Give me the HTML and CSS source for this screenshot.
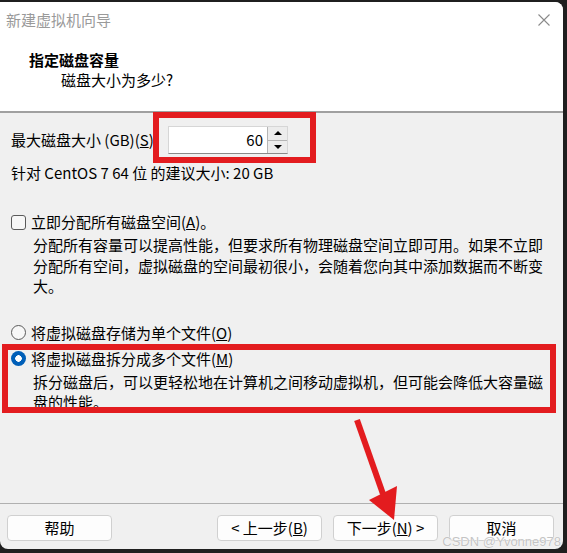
FILE: index.html
```html
<!DOCTYPE html>
<html>
<head>
    <title>新建虚拟机向导</title>
    <link rel="stylesheet" href="styles.css">
</head>
<body>
    <div class="window">
        <div class="header">
            <div class="title-bar">
                <span class="title">新建虚拟机向导</span>
                <svg class="close" width="12" height="12" viewBox="0 0 12 12">
                    <path d="M0.5 0.5 L11.5 11.5 M11.5 0.5 L0.5 11.5" stroke="#8a8a8a" stroke-width="1.1" fill="none"/>
                </svg>
            </div>
            <div class="heading">指定磁盘容量</div>
            <div class="subheading">磁盘大小为多少?</div>
        </div>

        <div class="content">
            <div class="size-row">
                <label class="size-label">最大磁盘大小 (GB)(<u>S</u>):</label>
                <div class="spin">
                    <div class="spin-value">60</div>
                    <div class="spin-buttons">
                        <div class="spin-btn"><span class="tri-up"></span></div>
                        <div class="spin-btn"><span class="tri-down"></span></div>
                    </div>
                </div>
            </div>
            <div class="recommend">针对 CentOS 7 64 位 的建议大小: 20 GB</div>

            <div class="option check-row">
                <span class="checkbox"></span>
                <span>立即分配所有磁盘空间(<u>A</u>)。</span>
            </div>
            <div class="desc">分配所有容量可以提高性能，但要求所有物理磁盘空间立即可用。如果不立即分配所有空间，虚拟磁盘的空间最初很小，会随着您向其中添加数据而不断变大。</div>

            <div class="option radio-row first">
                <span class="radio"></span>
                <span>将虚拟磁盘存储为单个文件(<u>O</u>)</span>
            </div>
            <div class="option radio-row">
                <span class="radio checked"></span>
                <span>将虚拟磁盘拆分成多个文件(<u>M</u>)</span>
            </div>
            <div class="desc">拆分磁盘后，可以更轻松地在计算机之间移动虚拟机，但可能会降低大容量磁盘的性能。</div>
        </div>

        <div class="footer">
            <button class="btn">帮助</button>
            <div class="nav-buttons">
                <button class="btn">&lt; 上一步(<u>B</u>)</button>
                <button class="btn">下一步(<u>N</u>) &gt;</button>
                <button class="btn">取消</button>
            </div>
        </div>

        <!-- annotations -->
        <div class="mark mark-size"></div>
        <div class="mark mark-split"></div>
        <svg class="arrow" width="60" height="110" viewBox="0 0 60 110">
            <line x1="6" y1="8" x2="32" y2="82" stroke="#e31c1f" stroke-width="6"/>
            <polygon points="18,88 46,74 43,108" fill="#e31c1f"/>
        </svg>
    </div>
    <div class="watermark">CSDN @Yvonne978</div>
</body>
</html>
```

FILE: styles.css
```css
body {
    margin: 0;
    background-color: #1f1f1f;
    font-family: "Noto Sans CJK SC", "Liberation Sans", sans-serif;
    font-size: 15px;
    color: #000;
}

.window {
    position: relative;
    width: 563px;
    height: 547px;
    margin-top: 2px;
    background-color: #f0f0f0;
    border-radius: 0 8px 8px 8px;
    overflow: hidden;
    display: flex;
    flex-direction: column;
}

.header {
    height: 109px;
    background-color: #fff;
    border-bottom: 2px solid #a0a0a0;
}

.title-bar {
    display: flex;
    justify-content: space-between;
    align-items: center;
    height: 20px;
    padding: 8px 13px 0 6px;
}

.title {
    color: #9a9a9a;
    line-height: 20px;
}

.heading {
    margin-top: 20px;
    padding-left: 29px;
    font-weight: bold;
    line-height: 20px;
}

.subheading {
    padding-left: 61px;
    line-height: 20px;
}

.content {
    flex: 1;
    padding-left: 11px;
    padding-right: 14px;
}

.size-row {
    display: flex;
    align-items: center;
    margin-top: 13px;
    height: 28px;
}

.size-label {
    width: 157px;
    line-height: 20px;
}

.spin {
    display: flex;
    height: 28px;
    width: 120px;
    border: 1px solid #d6d6d6;
    border-bottom-color: #8a8a8a;
    box-sizing: border-box;
    background-color: #fff;
}

.spin-value {
    flex: 1;
    text-align: right;
    padding-right: 4px;
    line-height: 26px;
}

.spin-buttons {
    width: 19px;
    display: flex;
    flex-direction: column;
    border-left: 1px solid #b5b5b5;
}

.spin-btn {
    flex: 1;
    background-color: #ececec;
    display: flex;
    align-items: center;
    justify-content: center;
}

.spin-btn + .spin-btn {
    border-top: 1px solid #b5b5b5;
}

.tri-up {
    border-left: 4px solid transparent;
    border-right: 4px solid transparent;
    border-bottom: 4px solid #000;
}

.tri-down {
    border-left: 4px solid transparent;
    border-right: 4px solid transparent;
    border-top: 4px solid #000;
}

.recommend {
    margin-top: 9px;
    line-height: 20px;
}

.option {
    display: flex;
    align-items: center;
    gap: 5px;
    line-height: 20px;
}

.check-row {
    margin-top: 29px;
}

.radio-row.first {
    margin-top: 26px;
}

.radio-row {
    margin-top: 6px;
}

.checkbox {
    width: 13px;
    height: 13px;
    border: 1px solid #5a5a5a;
    border-radius: 3px;
    background-color: #f7f7f7;
}

.radio {
    width: 13px;
    height: 13px;
    border: 1px solid #5a5a5a;
    border-radius: 50%;
    background-color: #f7f7f7;
    box-sizing: content-box;
}

.radio.checked {
    width: 15px;
    height: 15px;
    border: none;
    background: radial-gradient(circle, #fff 0 3px, #005fb8 3.5px);
}

.desc {
    margin-top: 3px;
    padding-left: 22px;
    line-height: 20.5px;
}

.footer {
    height: 34px;
    border-top: 1px solid #b0b0b0;
    display: flex;
    justify-content: space-between;
    padding: 11px 9px 0 7px;
}

.nav-buttons {
    display: flex;
    gap: 11px;
}

.btn {
    width: 105px;
    height: 26px;
    font-family: inherit;
    font-size: 15px;
    background-color: #fdfdfd;
    border: 1px solid #d0d0d0;
    border-radius: 4px;
    padding: 0;
    line-height: 20px;
}

.mark {
    position: absolute;
    border: 6px solid #e31c1f;
    box-sizing: border-box;
}

.mark-size {
    left: 153px;
    top: 110px;
    width: 163px;
    height: 51px;
}

.mark-split {
    left: 2px;
    top: 342px;
    width: 554px;
    height: 69px;
}

.arrow {
    position: absolute;
    left: 351px;
    top: 410px;
}

.watermark {
    position: absolute;
    right: 6px;
    top: 534px;
    font-family: "Liberation Sans", sans-serif;
    font-size: 13px;
    color: #c4c4c4;
    text-shadow: 0 0 1px #fff, 0 0 1px #fff;
}
```
